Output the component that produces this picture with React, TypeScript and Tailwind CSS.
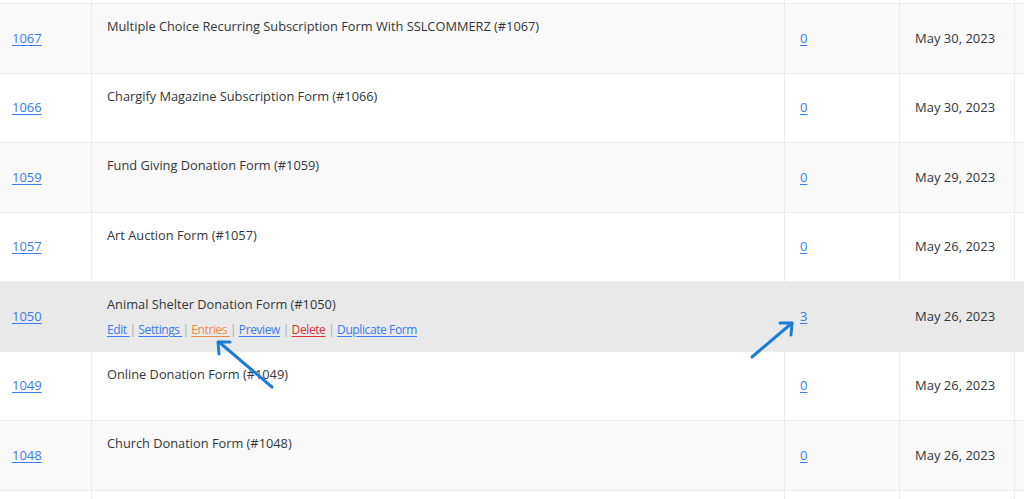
import React from "react";

type Row = { id: string; title: string; count: string; date: string; hover?: boolean };

const rows: Row[] = [
  { id: "1067", title: "Multiple Choice Recurring Subscription Form With SSLCOMMERZ (#1067)", count: "0", date: "May 30, 2023" },
  { id: "1066", title: "Chargify Magazine Subscription Form (#1066)", count: "0", date: "May 30, 2023" },
  { id: "1059", title: "Fund Giving Donation Form (#1059)", count: "0", date: "May 29, 2023" },
  { id: "1057", title: "Art Auction Form (#1057)", count: "0", date: "May 26, 2023" },
  { id: "1050", title: "Animal Shelter Donation Form (#1050)", count: "3", date: "May 26, 2023", hover: true },
  { id: "1049", title: "Online Donation Form (#1049)", count: "0", date: "May 26, 2023" },
  { id: "1048", title: "Church Donation Form (#1048)", count: "0", date: "May 26, 2023" },
];

const link = "text-[#3b7cf2] underline underline-offset-2";
const sep = "text-[#a7aaad]";

function Cells({ row, bg, h }: { row?: Row; bg: string; h: string }) {
  return (
    <div className={`flex ${h} ${bg} border-b border-[#ececec]`}>
      <div className="w-[92px] shrink-0 border-r border-[#ececec] flex items-center pl-3">
        {row && <a className={link}>{row.id}</a>}
      </div>
      <div className="w-[693px] shrink-0 border-r border-[#ececec] pl-[15px] pt-[13px]">
        {row && (
          <>
            <div className="text-[#32373c] text-[12.8px]">{row.title}</div>
            {row.hover && (
              <div className="mt-[7px] text-[12px] tracking-[-0.4px] whitespace-pre">
                <a className={link}>Edit </a>
                <span className={sep}>| </span>
                <a className={link}>Settings </a>
                <span className={sep}>| </span>
                <a className="text-[#f08a4b] underline underline-offset-2">Entries </a>
                <span className={sep}>| </span>
                <a className={link}>Preview</a>
                <span className={sep}> | </span>
                <a className="text-[#d63638] underline underline-offset-2">Delete</a>
                <span className={sep}> | </span>
                <a className={link}>Duplicate Form</a>
              </div>
            )}
          </>
        )}
      </div>
      <div className="w-[115px] shrink-0 border-r border-[#ececec] flex items-center pl-[15px]">
        {row && <a className={link}>{row.count}</a>}
      </div>
      <div className="w-[115px] shrink-0 border-r border-[#ececec] flex items-center pl-[15px] text-[#32373c]">
        {row && row.date}
      </div>
      <div className="flex-1" />
    </div>
  );
}

export default function App() {
  return (
    <div
      className="relative w-[1024px] h-[499px] overflow-hidden bg-white text-[13px]"
      style={{ fontFamily: '"Open Sans", "Noto Sans", sans-serif' }}
    >
      <Cells bg="bg-white" h="h-[4px]" />
      {rows.map((r, i) => (
        <Cells
          key={r.id}
          row={r}
          h={i % 2 === 0 ? "h-[70px]" : "h-[69px]"}
          bg={r.hover ? "bg-[#e9e9e9]" : i % 2 === 0 ? "bg-[#f9f9f9]" : "bg-white"}
        />
      ))}
      <Cells bg="bg-white" h="h-[20px]" />

      <svg className="absolute inset-0 pointer-events-none" width="1024" height="499">
        <g stroke="#1b7ed6" strokeWidth="3" fill="none" strokeLinecap="round" strokeLinejoin="round">
          <line x1="272" y1="387" x2="219" y2="342" />
          <polyline points="219,354 218,342 230,342" />
          <line x1="752" y1="357" x2="792" y2="323" />
          <polyline points="780,323 792,323 791,335" />
        </g>
      </svg>
    </div>
  );
}
